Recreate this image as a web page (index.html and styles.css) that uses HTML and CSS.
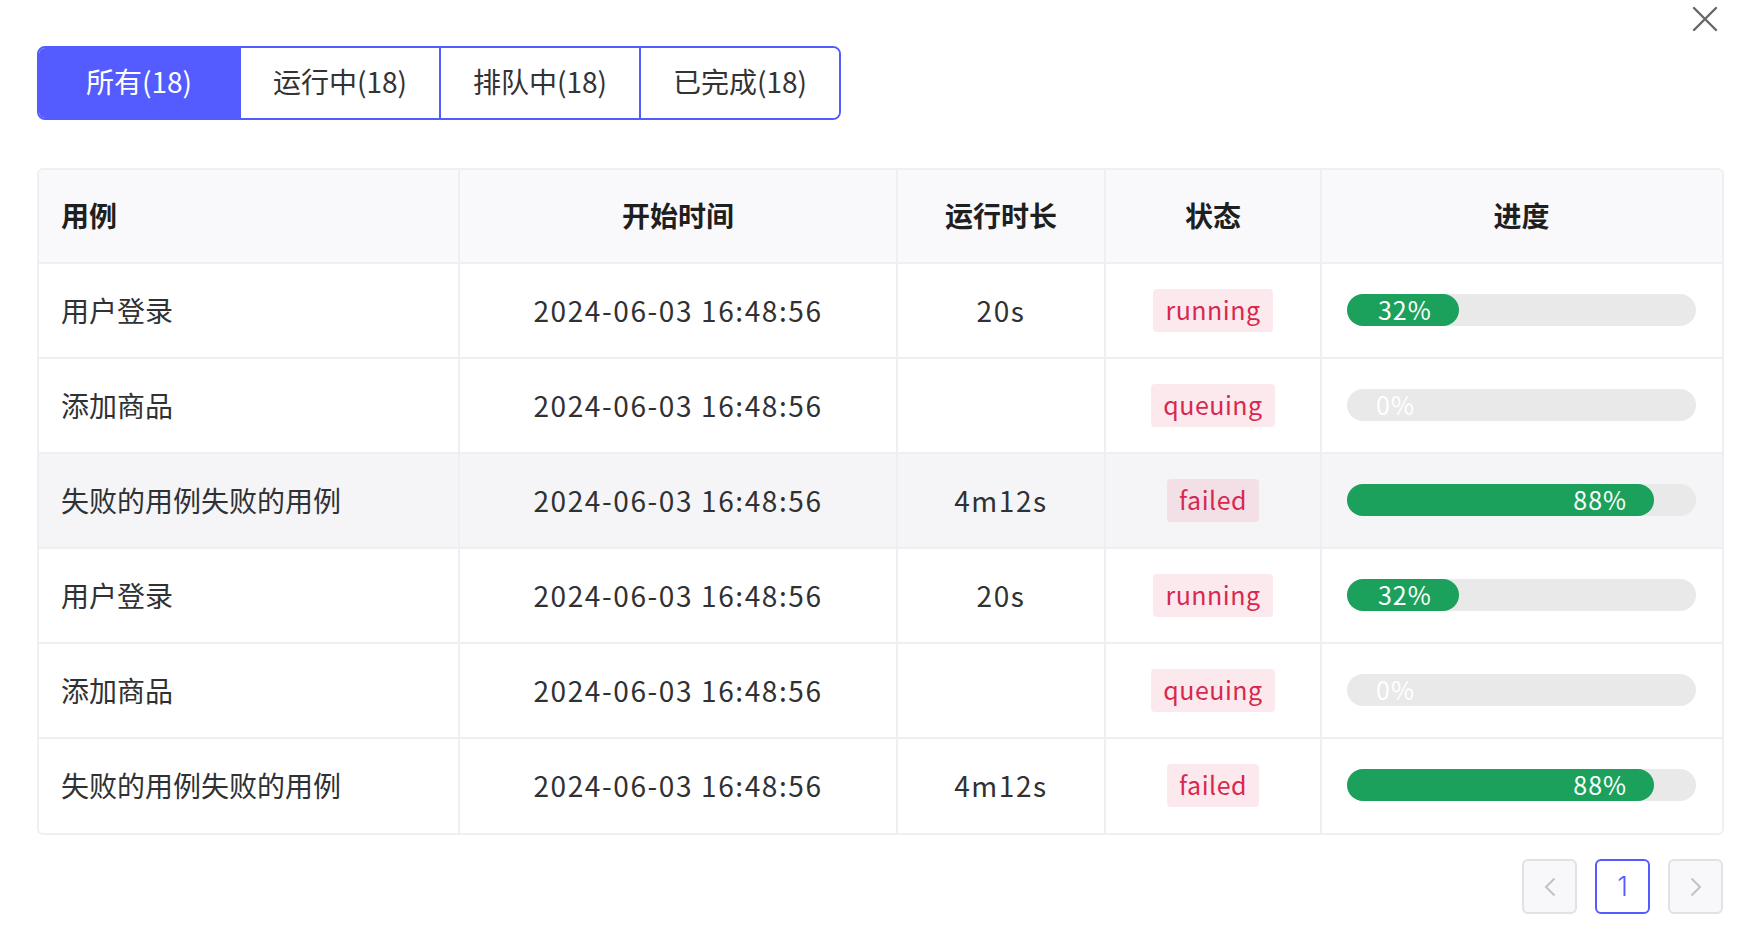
FILE: index.html
```html
<!DOCTYPE html>
<html lang="zh-CN">
<head>
    <meta charset="UTF-8">
    <title>用例运行</title>
    <link rel="stylesheet" href="styles.css">
</head>
<body>
    <main class="dialog">
        <button class="dialog-close" aria-label="关闭">
            <svg viewBox="0 0 26 26" width="26" height="26">
                <path d="M2 2 L24 24 M24 2 L2 24" stroke="#666" stroke-width="2.4" stroke-linecap="round" fill="none"/>
            </svg>
        </button>

        <nav class="tabs">
            <button class="tab tab-active">所有(18)</button>
            <button class="tab">运行中(18)</button>
            <button class="tab">排队中(18)</button>
            <button class="tab">已完成(18)</button>
        </nav>

        <div class="table-wrap">
            <table class="case-table">
                <colgroup>
                    <col style="width:420px">
                    <col style="width:438px">
                    <col style="width:208px">
                    <col style="width:216px">
                    <col>
                </colgroup>
                <thead>
                    <tr>
                        <th class="cell-left">用例</th>
                        <th>开始时间</th>
                        <th>运行时长</th>
                        <th>状态</th>
                        <th>进度</th>
                    </tr>
                </thead>
                <tbody>
                    <tr>
                        <td class="cell-left">用户登录</td>
                        <td class="cell-num">2024-06-03 16:48:56</td>
                        <td class="cell-num">20s</td>
                        <td><span class="tag">running</span></td>
                        <td>
                            <div class="progress"><div class="progress-bar" style="width:32%"><span>32%</span></div></div>
                        </td>
                    </tr>
                    <tr>
                        <td class="cell-left">添加商品</td>
                        <td class="cell-num">2024-06-03 16:48:56</td>
                        <td class="cell-num"></td>
                        <td><span class="tag">queuing</span></td>
                        <td>
                            <div class="progress"><div class="progress-bar" style="width:0%"><span>0%</span></div></div>
                        </td>
                    </tr>
                    <tr class="row-hover">
                        <td class="cell-left">失败的用例失败的用例</td>
                        <td class="cell-num">2024-06-03 16:48:56</td>
                        <td class="cell-num">4m12s</td>
                        <td><span class="tag">failed</span></td>
                        <td>
                            <div class="progress"><div class="progress-bar" style="width:88%"><span>88%</span></div></div>
                        </td>
                    </tr>
                    <tr>
                        <td class="cell-left">用户登录</td>
                        <td class="cell-num">2024-06-03 16:48:56</td>
                        <td class="cell-num">20s</td>
                        <td><span class="tag">running</span></td>
                        <td>
                            <div class="progress"><div class="progress-bar" style="width:32%"><span>32%</span></div></div>
                        </td>
                    </tr>
                    <tr>
                        <td class="cell-left">添加商品</td>
                        <td class="cell-num">2024-06-03 16:48:56</td>
                        <td class="cell-num"></td>
                        <td><span class="tag">queuing</span></td>
                        <td>
                            <div class="progress"><div class="progress-bar" style="width:0%"><span>0%</span></div></div>
                        </td>
                    </tr>
                    <tr>
                        <td class="cell-left">失败的用例失败的用例</td>
                        <td class="cell-num">2024-06-03 16:48:56</td>
                        <td class="cell-num">4m12s</td>
                        <td><span class="tag">failed</span></td>
                        <td>
                            <div class="progress"><div class="progress-bar" style="width:88%"><span>88%</span></div></div>
                        </td>
                    </tr>
                </tbody>
            </table>
        </div>

        <div class="pager">
            <button class="pager-btn pager-arrow" aria-label="上一页">
                <svg viewBox="0 0 12 20" width="12" height="20"><path d="M10.5 1.5 L2 10 L10.5 18.5" stroke="#c2c2c6" stroke-width="2" fill="none"/></svg>
            </button>
            <button class="pager-btn pager-current">1</button>
            <button class="pager-btn pager-arrow" aria-label="下一页">
                <svg viewBox="0 0 12 20" width="12" height="20"><path d="M1.5 1.5 L10 10 L1.5 18.5" stroke="#c2c2c6" stroke-width="2" fill="none"/></svg>
            </button>
        </div>
    </main>
</body>
</html>
```

FILE: styles.css
```css
*{
    padding: 0;
    margin: 0;
    box-sizing: border-box;
}
body{
    background-color: #fff;
    color: #303133;
    font-family: "Noto Sans CJK SC", "Noto Sans", sans-serif;
}
button{
    font-family: inherit;
    cursor: pointer;
}
.dialog{
    position: relative;
    padding: 46px 34px 0 37px;
}
.dialog-close{
    position: absolute;
    top: 6px;
    right: 40px;
    width: 26px;
    height: 26px;
    border: none;
    background: none;
    display: flex;
}

/* tabs */
.tabs{
    display: inline-flex;
    border: 2px solid #545cff;
    border-radius: 8px;
    overflow: hidden;
}
.tab{
    width: 200px;
    height: 70px;
    padding-bottom: 4px;
    border: none;
    border-left: 2px solid #545cff;
    background-color: #fff;
    color: #333;
    font-size: 28px;
}
.tab:first-child{
    border-left: none;
}
.tab.tab-active{
    background-color: #545cff;
    color: #fff;
}

/* table */
.table-wrap{
    margin-top: 48px;
    border: 2px solid #eeeef3;
    border-radius: 6px;
    overflow: hidden;
}
.case-table{
    width: 100%;
    border-collapse: collapse;
    table-layout: fixed;
    font-size: 28px;
    th, td{
        height: 95px;
        padding: 0 25px 2px;
        text-align: center;
        border-right: 2px solid #eeeef3;
        border-bottom: 2px solid #eeeef3;
    }
    th:last-child, td:last-child{
        border-right: none;
        padding-right: 26px;
    }
    tbody tr:last-child td{
        border-bottom: none;
    }
    th{
        height: 93px;
        background-color: #f9f9fb;
        color: #1f1f1f;
        font-weight: 600;
    }
    .cell-left{
        text-align: left;
        padding-left: 22px;
    }
    .cell-num{
        letter-spacing: 1.6px;
    }
    .row-hover td{
        background-color: #f5f5f8;
    }
}
.tag{
    display: inline-block;
    height: 43px;
    line-height: 41px;
    padding: 0 12px;
    border-radius: 4px;
    background-color: rgba(230, 40, 80, .1);
    color: #d8284f;
    font-size: 25px;
    letter-spacing: .5px;
}
.progress{
    height: 32px;
    border-radius: 16px;
    background-color: #e9e9ea;
}
.progress-bar{
    height: 100%;
    border-radius: 16px;
    background-color: #1ba15b;
    text-align: right;
    white-space: nowrap;
    span{
        display: inline-block;
        padding: 0 27px 0 29px;
        line-height: 31px;
        color: #fff;
        font-size: 25px;
        letter-spacing: 1px;
        vertical-align: top;
    }
}

/* pagination */
.pager{
    display: flex;
    justify-content: flex-end;
    gap: 18px;
    margin-top: 24px;
    padding-right: 1px;
}
.pager-btn{
    width: 55px;
    height: 55px;
    border-radius: 6px;
    display: flex;
    align-items: center;
    justify-content: center;
    font-family: Inter, "Noto Sans", sans-serif;
    font-size: 27px;
    font-weight: 300;
}
.pager-arrow{
    background-color: #f8f8fa;
    border: 2px solid #e1e1e6;
}
.pager-current{
    background-color: #fff;
    border: 2px solid #545cff;
    color: #545cff;
    padding-bottom: 1px;
}
```
